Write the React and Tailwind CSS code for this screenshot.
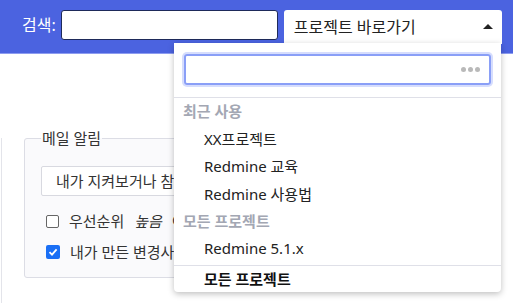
import React from 'react';

const font = { fontFamily: '"Noto Sans", "Noto Sans CJK KR", sans-serif' };

const recent = ['XX프로젝트', 'Redmine 교육', 'Redmine 사용법'];
const all = ['Redmine 5.1.x'];

const GroupLabel = ({ children }) => (
    <div className="h-[27px] flex items-center pl-[9px] text-[15px] font-bold text-[#a3a7b3]">{children}</div>
);

const Item = ({ children }) => (
    <div className="h-[27.5px] flex items-center pl-[30px] text-[15px] text-[#222]">{children}</div>
);

const App = () => {
    return (
        <div className="relative w-[513px] h-[303px] overflow-hidden bg-white" style={font}>
            {/* header */}
            <div className="h-[54px] bg-[#4b63e0] border-b border-[#8d9cf0] flex items-start pt-[10px]">
                <span className="ml-[22px] mt-[5px] text-white text-[16px] leading-[20px]">검색:</span>
                <input className="ml-[5px] w-[217px] h-[30px] bg-white border border-[#1e2a5a] rounded-[3px] outline-none" />
                <div className="ml-[6px] w-[218px] h-[34px] bg-white rounded-t-[3px] flex items-center justify-between pl-[10px] pr-[9px]">
                    <span className="text-[16px] text-[#222]">프로젝트 바로가기</span>
                    <span className="w-0 h-0 border-l-[5px] border-r-[5px] border-b-[5px] border-l-transparent border-r-transparent border-b-[#222] mb-[2px]"></span>
                </div>
            </div>

            {/* page content */}
            <div className="mt-[84px] ml-[1px] h-[200px] border-l border-[#e3e4ea] pl-[22px] flex flex-col">
                <fieldset className="-mt-[9px] w-[400px] h-[149px] border border-[#dcdde5] rounded-[3px] bg-[#fafafc] px-[16px] pb-[10px]">
                    <legend className="px-[1px] text-[15px] text-[#333] leading-[18px]">메일 알림</legend>
                    <div className="mt-[19px] h-[30px] w-[300px] bg-white border border-[#d8d9e0] rounded-[2px] flex items-center pl-[14px] text-[15px] text-[#333]">
                        내가 지켜보거나 참여하는 사항
                    </div>
                    <label className="mt-[15px] h-[20px] flex items-center gap-[10px] text-[15px] text-[#333] pl-[5px]">
                        <span className="w-[13px] h-[13px] border border-[#666] rounded-[2px] bg-white"></span>
                        우선순위 <i>높음</i> 이상 알림
                    </label>
                    <label className="mt-[11px] h-[20px] flex items-center gap-[10px] text-[15px] text-[#333] pl-[5px]">
                        <span className="w-[14px] h-[14px] rounded-[2px] bg-[#1a6ff5] flex items-center justify-center">
                            <svg width="10" height="10" viewBox="0 0 10 10"><path d="M1.5 5.2 L4 7.6 L8.6 2.4" stroke="white" strokeWidth="1.8" fill="none" /></svg>
                        </span>
                        내가 만든 변경사항은 알리지 않음
                    </label>
                </fieldset>
            </div>

            {/* dropdown */}
            <div className="absolute left-[174px] top-[43px] w-[327px] bg-white rounded-b-[4px] shadow-[0_2px_6px_rgba(0,0,0,0.25)]">
                <div className="px-[10px] pt-[11px] pb-[12px] border-b border-[#dfe0e8]">
                    <div className="h-[31px] border-2 border-[#8a9ff7] rounded-[3px] shadow-[0_0_0_2px_#d6ddfd] flex items-center justify-end gap-[2px] pr-[9px]">
                        <span className="w-[5px] h-[5px] rounded-full bg-[#b9b9b9]"></span>
                        <span className="w-[5px] h-[5px] rounded-full bg-[#b9b9b9]"></span>
                        <span className="w-[5px] h-[5px] rounded-full bg-[#b9b9b9]"></span>
                    </div>
                </div>
                <GroupLabel>최근 사용</GroupLabel>
                {recent.map((p) => <Item key={p}>{p}</Item>)}
                <GroupLabel>모든 프로젝트</GroupLabel>
                {all.map((p) => <Item key={p}>{p}</Item>)}
                <div className="mt-[3px] border-t border-[#dfe0e8] h-[27px] flex items-center pl-[30px] text-[15px] font-bold text-[#111]">
                    모든 프로젝트
                </div>
            </div>
        </div>
    );
};

export default App;
